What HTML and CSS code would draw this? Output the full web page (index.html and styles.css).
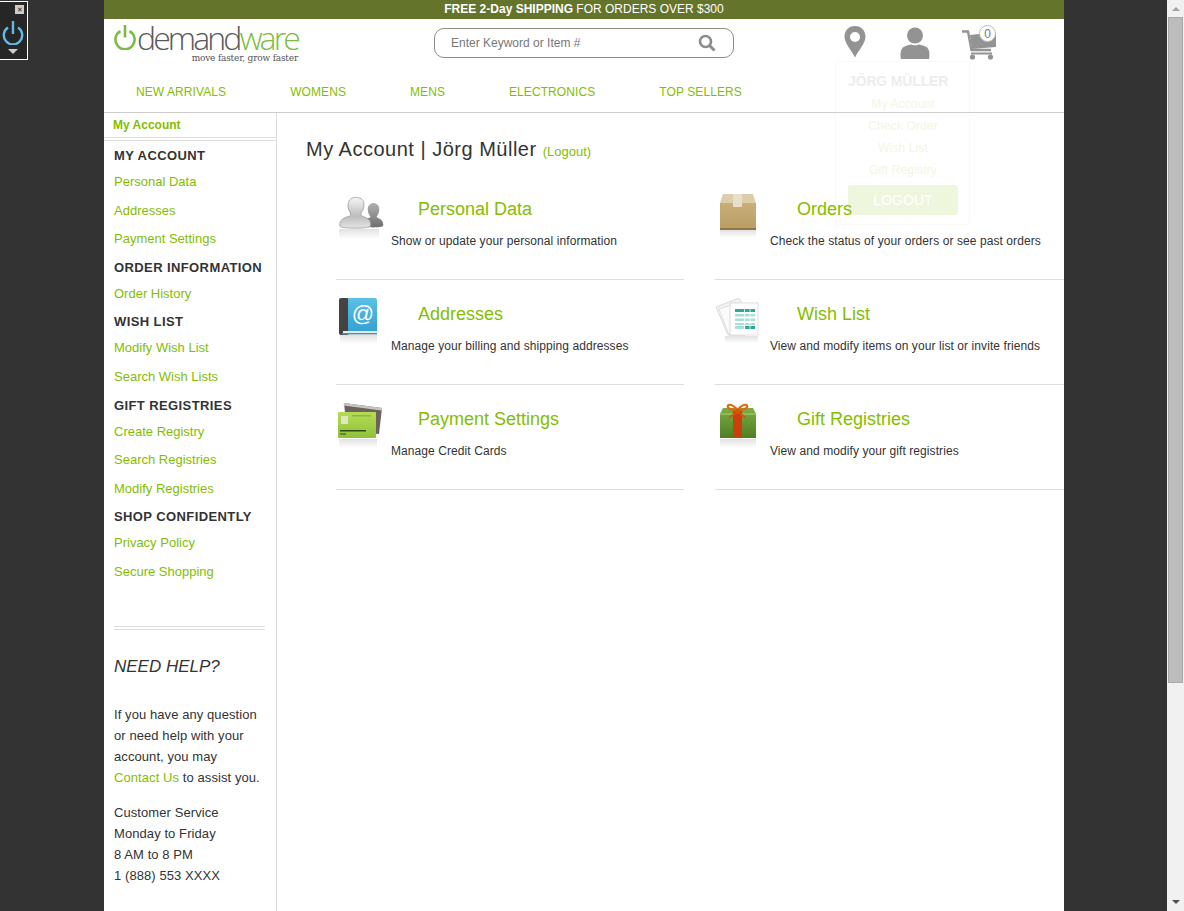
FILE: index.html
```html
<!DOCTYPE html>
<html lang="en">
<head>
    <meta charset="UTF-8">
    <title>My Account | Demandware</title>
    <link rel="stylesheet" href="styles.css">
</head>
<body>
    <!-- Storefront toolbar -->
    <div class="toolbar">
        <span class="toolbar-close">&#10005;</span>
        <svg class="toolbar-power" width="22" height="26" viewBox="0 0 22 26"><path d="M6 8.500a9.200 9.200 0 1 0 10 0" fill="none" stroke="#62bbe6" stroke-width="2.400"/><path d="M11 2v13" stroke="#62bbe6" stroke-width="2.400"/></svg>
        <span class="toolbar-arrow"></span>
    </div>

    <div class="viewport">
        <div class="page">
            <div class="banner"><b>FREE 2-Day SHIPPING</b> FOR ORDERS OVER $300</div>

            <header class="top">
                <a class="logo" href="#">
                    <span class="logo-line">
                        <svg class="logo-power" width="22" height="25" viewBox="0 0 22 25"><path d="M6.500 6.200a9.600 9.600 0 1 0 9 0" fill="none" stroke="#7cbc42" stroke-width="2.600"/><path d="M11 0v12.500" stroke="#7cbc42" stroke-width="2.600"/></svg>
                        <span class="logo-text">demand<em>ware</em></span>
                    </span>
                    <span class="logo-tag">move faster, grow faster</span>
                </a>
                <form class="search">
                    <span class="search-text">Enter Keyword or Item #</span>
                    <svg width="18" height="18" viewBox="0 0 18 18"><circle cx="7.500" cy="7.500" r="5.500" fill="none" stroke="#8c8c8c" stroke-width="2.600"/><path d="M11.500 11.500l5 5" stroke="#8c8c8c" stroke-width="3"/></svg>
                </form>
                <div class="top-icons">
                    <svg class="icon-pin" width="22" height="32" viewBox="0 0 22 32"><path fill-rule="evenodd" d="M11 0C4.800 0 .5 4.600.5 10.600.5 17 7 24 11 31.500 15 24 21.500 17 21.500 10.600 21.500 4.600 17.200 0 11 0zm0 6a5 5 0 1 1 0 10 5 5 0 0 1 0-10z" fill="#939393"/></svg>
                    <svg class="icon-user" width="30" height="32" viewBox="0 0 30 32"><circle cx="15" cy="8.500" r="8" fill="#939393"/><path d="M1 32c-1-4-.6-10 2.500-12 3-1.800 6-2.600 8-2.600 2 1.200 5 1.200 7 0 2 0 5 .8 8 2.600 3.100 2 3.500 8 2.500 12z" fill="#939393"/></svg>
                    <span class="cart">
                        <svg width="34" height="34" viewBox="0 0 34 34"><path d="M0 5.500h6l3.500 18.500H29" fill="none" stroke="#939393" stroke-width="2.400"/><path d="M8 9l26-3v15L10 23z" fill="#939393"/><circle cx="10.500" cy="31" r="2.600" fill="#939393"/><circle cx="28.500" cy="31" r="2.600" fill="#939393"/><path d="M9 27.500h21" stroke="#939393" stroke-width="2"/></svg>
                        <span class="cart-count">0</span>
                    </span>
                </div>
            </header>

            <nav class="nav">
                <a href="#">New Arrivals</a>
                <a href="#">Womens</a>
                <a href="#">Mens</a>
                <a href="#">Electronics</a>
                <a href="#">Top Sellers</a>
            </nav>

            <!-- Hover menu, caught half faded out -->
            <div class="user-menu">
                <div class="user-name">JÖRG MÜLLER</div>
                <a href="#">My Account</a>
                <a href="#">Check Order</a>
                <a href="#">Wish List</a>
                <a href="#">Gift Registry</a>
                <span class="user-logout">LOGOUT</span>
            </div>

            <div class="columns">
                <aside class="sidebar">
                    <div class="crumb">My Account</div>
                    <div class="side-nav">
                        <h3>My Account</h3>
                        <a href="#">Personal Data</a>
                        <a href="#">Addresses</a>
                        <a href="#">Payment Settings</a>
                        <h3>Order Information</h3>
                        <a href="#">Order History</a>
                        <h3>Wish List</h3>
                        <a href="#">Modify Wish List</a>
                        <a href="#">Search Wish Lists</a>
                        <h3>Gift Registries</h3>
                        <a href="#">Create Registry</a>
                        <a href="#">Search Registries</a>
                        <a href="#">Modify Registries</a>
                        <h3>Shop Confidently</h3>
                        <a href="#">Privacy Policy</a>
                        <a href="#">Secure Shopping</a>
                    </div>
                    <div class="help">
                        <h2>NEED HELP?</h2>
                        <p>If you have any question or need help with your account, you may<br><a href="#">Contact Us</a> to assist you.</p>
                        <p>Customer Service<br>Monday to Friday<br>8 AM to 8 PM<br>1 (888) 553 XXXX</p>
                    </div>
                </aside>

                <main class="content">
                    <h1>My Account | Jörg Müller <small>(<a href="#">Logout</a>)</small></h1>
                    <div class="cards">
                        <section class="card">
                            <svg class="card-icon" width="48" height="50" viewBox="0 0 48 50">
                                <defs>
                                    <linearGradient id="gPerson" x1="0" y1="0" x2="0" y2="1"><stop offset="0" stop-color="#f6f6f6"/><stop offset=".6" stop-color="#bdbdbd"/><stop offset="1" stop-color="#e4e4e4"/></linearGradient>
                                    <linearGradient id="gPersonDark" x1="0" y1="0" x2="0" y2="1"><stop offset="0" stop-color="#b0b0b0"/><stop offset="1" stop-color="#6f6f6f"/></linearGradient>
                                    <linearGradient id="gShine" x1="0" y1="0" x2="0" y2="1"><stop offset="0" stop-color="#e2e2e2"/><stop offset="1" stop-color="#fff"/></linearGradient>
                                </defs>
                                <g transform="translate(2 0) scale(.96 .92)">
                                    <path d="M26 36c0-7 4-8 8-10-2-3-3-5-3-9 0-3 3-6 6-6s6 3 6 6c0 4-1 6-3 9 3 2 8 3 7 10-1 2-20 2-21 0z" fill="url(#gPersonDark)"/>
                                    <path d="M2 36c-1-7 4-9 10-11 2-1 1-3 0-5-2-3-2-7-1-10 1-4 5-6 9-5 4 0 7 3 7 7 0 3 0 6-2 8-1 2-2 4 0 5 5 2 10 4 9 11-1 3-31 3-32 0z" fill="url(#gPerson)" stroke="#8e8e8e" stroke-width=".7"/>
                                </g>
                                <rect x="3" y="36" width="40" height="10" fill="url(#gShine)"/>
                            </svg>
                            <div class="card-body">
                                <h2>Personal Data</h2>
                                <p>Show or update your personal information</p>
                            </div>
                        </section>
                        <section class="card">
                            <svg class="card-icon" width="48" height="50" viewBox="0 0 48 50">
                                <defs><linearGradient id="gBox" x1="0" y1="0" x2="0" y2="1"><stop offset="0" stop-color="#c9ae78"/><stop offset="1" stop-color="#b99d66"/></linearGradient></defs>
                                <path d="M8 1h30l3 9H5z" fill="#dccdab"/>
                                <path d="M5 10h36v27H5z" fill="url(#gBox)"/>
                                <path d="M5 35h36v2H5z" fill="#8f7747"/>
                                <path d="M18 1h9v13h-9z" fill="#e8dec9"/>
                                <rect x="5" y="37" width="36" height="8" fill="url(#gShine)"/>
                            </svg>
                            <div class="card-body">
                                <h2>Orders</h2>
                                <p>Check the status of your orders or see past orders</p>
                            </div>
                        </section>
                        <section class="card">
                            <svg class="card-icon" width="48" height="50" viewBox="0 0 48 50">
                                <defs><linearGradient id="gBook" x1="0" y1="0" x2="0" y2="1"><stop offset="0" stop-color="#5cc0e6"/><stop offset="1" stop-color="#34a2d2"/></linearGradient></defs>
                                <rect x="3" y="0" width="10" height="37" rx="2" fill="#434343"/>
                                <path d="M12 0h27a2 2 0 0 1 2 2v31H12z" fill="url(#gBook)"/>
                                <path d="M7 33h34v2H7z" fill="#e3e8eb"/>
                                <path d="M6 35h35v1.500H6z" fill="#5d8ea6"/>
                                <text x="27" y="23" class="card-at">@</text>
                                <rect x="4" y="37" width="37" height="9" fill="url(#gShine)"/>
                            </svg>
                            <div class="card-body">
                                <h2>Addresses</h2>
                                <p>Manage your billing and shipping addresses</p>
                            </div>
                        </section>
                        <section class="card">
                            <svg class="card-icon" width="48" height="50" viewBox="0 0 48 50">
                                <path d="M1 9l23-9 6 10v27H13z" fill="#f3f3f3" stroke="#cfcfcf" stroke-width=".7"/>
                                <path d="M4 11l20-6 6 8v24H14z" fill="#fbfbfb" stroke="#d6d6d6" stroke-width=".7"/>
                                <rect x="15" y="5" width="28" height="32" fill="#fff" stroke="#d0d0d0" stroke-width=".7"/>
                                <path d="M20 11h20v3H20zM30 28h10v3H30z" fill="#2ea898"/>
                                <path d="M20 16h20v2.500H20zM20 20.500h20V23H20zM20 25h20v2H20zM20 28h9v3H20z" fill="#a8dfd8"/>
                                <path d="M29.500 11v20M35 11v20" stroke="#fff" stroke-width=".8"/>
                                <rect x="10" y="38" width="33" height="7" fill="url(#gShine)"/>
                            </svg>
                            <div class="card-body">
                                <h2>Wish List</h2>
                                <p>View and modify items on your list or invite friends</p>
                            </div>
                        </section>
                        <section class="card">
                            <svg class="card-icon" width="48" height="50" viewBox="0 0 48 50">
                                <defs><linearGradient id="gCard" x1="0" y1="0" x2="0" y2="1"><stop offset="0" stop-color="#b6dc55"/><stop offset="1" stop-color="#8fc03a"/></linearGradient></defs>
                                <path d="M8 0l38 5-3 26-32-2z" fill="#6b645c"/>
                                <path d="M8 0l38 5-.3 2.500L7.500 2.500z" fill="#c9c6c2"/>
                                <rect x="2" y="9" width="38" height="26" rx="1" fill="url(#gCard)"/>
                                <rect x="5" y="13" width="7" height="8" fill="#dce8c0"/>
                                <path d="M4 27h26v1.500H4zM4 30.500h6v1H4z" fill="#2f4d12"/>
                                <path d="M16 12h19v1.500H16z" fill="#8bb540"/>
                                <rect x="3" y="36" width="38" height="9" fill="url(#gShine)"/>
                            </svg>
                            <div class="card-body">
                                <h2>Payment Settings</h2>
                                <p>Manage Credit Cards</p>
                            </div>
                        </section>
                        <section class="card">
                            <svg class="card-icon" width="48" height="50" viewBox="0 0 48 50">
                                <defs><linearGradient id="gGift" x1="0" y1="0" x2="0" y2="1"><stop offset="0" stop-color="#7cae45"/><stop offset="1" stop-color="#4f7d22"/></linearGradient></defs>
                                <path d="M8 5h30l3 6v24H5V11z" fill="url(#gGift)"/>
                                <path d="M5 10h36v2H5z" fill="#8fbc58"/>
                                <path d="M18 6h9v29h-9z" fill="#c9400c"/>
                                <path d="M22.500 7c-3-4-7-6-9-5-2 2 0 5 9 5zm0 0c3-4 7-6 9-5 2 2 0 5-9 5z" fill="none" stroke="#dc6a12" stroke-width="2.200"/>
                                <path d="M20.500 6h4v3h-4zM20.500 9l-7 5 2 1 7-5 7 5 2-1-7-5z" fill="#d6560e"/>
                                <rect x="5" y="36" width="36" height="9" fill="url(#gShine)"/>
                            </svg>
                            <div class="card-body">
                                <h2>Gift Registries</h2>
                                <p>View and modify your gift registries</p>
                            </div>
                        </section>
                    </div>
                </main>
            </div>
        </div>
    </div>

    <div class="scrollbar">
        <span class="scroll-up"></span>
        <span class="scroll-thumb"></span>
        <span class="scroll-down"></span>
    </div>
</body>
</html>
```

FILE: styles.css
```css
html, body {
    height: 100%;
    margin: 0;
    overflow: hidden;
}

body {
    display: flex;
    font-family: "Liberation Sans", Arial, sans-serif;
    font-size: 12px;
    color: #333;
    background-color: #333;
}

a {
    color: #84bd00;
    text-decoration: none;
}

/* Toolbar */
.toolbar {
    position: absolute;
    top: 1px;
    left: 0;
    width: 27px;
    height: 57px;
    background-color: #262626;
    border: 1px solid #fff;
    border-left: 0;
}

.toolbar-close {
    position: absolute;
    top: 3px;
    left: 15px;
    width: 9px;
    height: 9px;
    line-height: 9px;
    font-size: 7px;
    text-align: center;
    color: #222;
    background-color: #ccc;
}

.toolbar-power {
    position: absolute;
    top: 17px;
    left: 2px;
}

.toolbar-arrow {
    position: absolute;
    top: 47px;
    left: 8px;
    border-top: 5px solid #ccc;
    border-left: 5px solid transparent;
    border-right: 5px solid transparent;
}

/* Page */
.viewport {
    flex: 1;
    min-width: 0;
}

.page {
    position: relative;
    width: 960px;
    height: 100%;
    margin-left: 104px;
    display: flex;
    flex-direction: column;
    background-color: #fff;
}

.banner {
    height: 19px;
    line-height: 19px;
    text-align: center;
    color: #fff;
    background-color: #64742b;
}

.top {
    display: flex;
    height: 54px;
}

.logo {
    width: 330px;
    margin-left: 10px;
    padding-top: 5px;
    display: block;
}

.logo-line {
    display: flex;
    align-items: flex-start;
    height: 28px;
}

.logo-power {
    margin-right: 1px;
    margin-top: 1px;
}

.logo-text {
    font-family: "Open Sans", sans-serif;
    font-weight: 300;
    font-size: 32px;
    line-height: 28px;
    letter-spacing: -2.900px;
    color: #58595b;
}

.logo-text em {
    font-style: normal;
    color: #7cbc42;
}

.logo-tag {
    display: block;
    width: 184px;
    margin-top: 1px;
    text-align: right;
    font-family: "DejaVu Serif", serif;
    font-size: 9px;
    line-height: 11px;
    letter-spacing: -.2px;
    color: #555;
}

.search {
    width: 300px;
    height: 30px;
    box-sizing: border-box;
    margin: 9px 0 0 -10px;
    padding: 0 17px 0 16px;
    display: flex;
    align-items: center;
    justify-content: space-between;
    border: 1px solid #8c8c8c;
    border-radius: 10px;
}

.search-text {
    color: #777;
}

.top-icons {
    display: flex;
    align-items: flex-start;
    margin-left: 110px;
    padding-top: 7px;
}

.icon-user {
    margin-left: 34px;
    margin-top: 1px;
}

.cart {
    position: relative;
    margin-left: 32px;
}

.cart-count {
    position: absolute;
    top: -1px;
    right: 0;
    width: 17px;
    height: 17px;
    line-height: 17px;
    text-align: center;
    color: #777;
    background-color: #fff;
    border: 1px solid #bbb;
    border-radius: 50%;
    box-sizing: border-box;
}

.nav {
    display: flex;
    height: 39px;
    border-bottom: 1px solid #ccc;
}

.nav a {
    padding: 0 32px;
    line-height: 39px;
    letter-spacing: .085px;
    text-transform: uppercase;
}

/* Faded user menu */
.user-menu {
    position: absolute;
    top: 61px;
    left: 731px;
    width: 135px;
    height: 164px;
    padding-top: 10px;
    box-sizing: border-box;
    text-align: center;
    border: 1px solid rgba(0, 0, 0, .025);
    border-radius: 4px;
    background-color: rgba(255, 255, 255, .1);
}

.user-name {
    padding-left: 12px;
    line-height: 18px;
    margin-bottom: 3px;
    font-size: 14px;
    font-weight: bold;
    text-align: left;
    letter-spacing: -.15px;
    color: #ededed;
}

.user-menu a {
    display: block;
    padding-left: 1px;
    line-height: 22px;
    letter-spacing: .15px;
    color: #f1f7e2;
}

.user-logout {
    display: block;
    width: 110px;
    height: 30px;
    margin: 4px 0 0 12px;
    line-height: 30px;
    font-size: 14px;
    color: #fff;
    background-color: rgba(132, 189, 0, .13);
    border-radius: 2px;
}

/* Columns */
.columns {
    flex: 1;
    display: flex;
    min-height: 0;
}

.sidebar {
    width: 173px;
    box-sizing: border-box;
    flex-shrink: 0;
    border-right: 1px solid #ddd;
}

.crumb {
    height: 24px;
    margin-right: -1px;
    padding-left: 9px;
    line-height: 25px;
    font-weight: bold;
    color: #84bd00;
}

.side-nav {
    padding: 4px 0 0 10px;
    border-top: 4px double #ddd;
}

.side-nav h3 {
    margin: 3.200px 0 0;
    height: 23px;
    line-height: 22px;
    font-size: 13px;
    font-weight: bold;
    letter-spacing: .4px;
    text-transform: uppercase;
    color: #333;
}

.side-nav h3:first-child {
    margin-top: 0;
}

.side-nav a {
    display: block;
    height: 28.500px;
    line-height: 28.500px;
    font-size: 13px;
}

.help {
    margin: 40px 11px 0 10px;
    padding-top: 21px;
    border-top: 4px double #ddd;
}

.help h2 {
    margin: 0 0 21px;
    font-size: 17px;
    line-height: 32px;
    font-weight: normal;
    font-style: italic;
}

.help p {
    margin: 0 0 14px;
    font-size: 13px;
    line-height: 21px;
    letter-spacing: .08px;
}

.content {
    flex: 1;
    padding-left: 29px;
}

.content h1 {
    margin: 23px 0 10px;
    font-size: 20px;
    line-height: 26px;
    font-weight: normal;
    letter-spacing: .5px;
}

.content h1 small {
    font-size: 13px;
    letter-spacing: 0;
    color: #84bd00;
}

.cards {
    display: grid;
    grid-template-columns: 348px 349px;
    column-gap: 31px;
    margin-left: 30px;
}

.card {
    position: relative;
    height: 105px;
    box-sizing: border-box;
    padding: 23px 0 0 55px;
    border-bottom: 1px solid #ddd;
}

.card-icon {
    position: absolute;
    top: 18px;
    left: 0;
}

.card-at {
    font-family: "Liberation Sans", sans-serif;
    font-size: 22px;
    fill: #fff;
    text-anchor: middle;
}

.card h2 {
    margin: 0 0 10px;
    padding-left: 27px;
    font-size: 18px;
    line-height: 22px;
    font-weight: normal;
    color: #84bd00;
}

.card p {
    margin: 0;
    line-height: 22px;
    letter-spacing: .08px;
}

/* Scrollbar */
.scrollbar {
    position: relative;
    width: 17px;
    flex-shrink: 0;
    background-color: #f1f1f1;
}

.scroll-up,
.scroll-down {
    position: absolute;
    left: 5px;
    border-left: 4px solid transparent;
    border-right: 4px solid transparent;
}

.scroll-up {
    top: 7px;
    border-bottom: 4px solid #a3a3a3;
}

.scroll-down {
    bottom: 7px;
    border-top: 4px solid #505050;
}

.scroll-thumb {
    position: absolute;
    top: 17px;
    left: 1px;
    width: 13px;
    height: 664px;
    background-color: #bcbcbc;
    border: 1px solid #a8a8a8;
}
```
